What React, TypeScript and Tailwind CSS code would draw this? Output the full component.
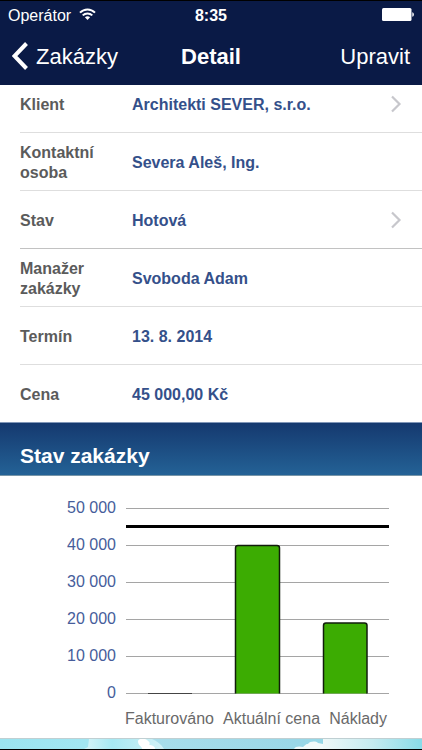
type Detail = { label: string; value: string; link?: boolean; strong?: boolean };

const details: Detail[] = [
  { label: "Klient", value: "Architekti SEVER, s.r.o.", link: true },
  { label: "Kontaktní osoba", value: "Severa Aleš, Ing." },
  { label: "Stav", value: "Hotová", link: true, strong: true },
  { label: "Manažer zakázky", value: "Svoboda Adam" },
  { label: "Termín", value: "13. 8. 2014" },
  { label: "Cena", value: "45 000,00 Kč" },
];

const ticks = ["50 000", "40 000", "30 000", "20 000", "10 000", "0"];
const gridLines = [1, 38, 75, 112, 149, 186];

function StatusBar() {
  return (
    <div className="grid h-7 grid-cols-3 items-center px-2 pt-0.5 text-base leading-6">
      <div className="flex items-center gap-2">
        <span>Operátor</span>
        <svg className="mb-1" width="17" height="12" viewBox="0 0 17 12" fill="none" stroke="currentColor" strokeWidth="2" aria-hidden="true">
          <path d="M1 4.6C5.2.3 11.8.3 16 4.6" />
          <path d="M3.7 7.4c2.7-2.7 6.9-2.7 9.6 0" />
          <path d="M8.5 12 5.9 9.3c1.5-1.4 3.7-1.4 5.2 0Z" fill="currentColor" stroke="none" />
        </svg>
      </div>
      <span className="text-center font-bold">8:35</span>
      <svg className="mb-1 justify-self-end" width="32" height="13" viewBox="0 0 32 13" fill="currentColor" aria-hidden="true">
        <rect x="0" y="0" width="29.5" height="13" rx="1.5" />
        <path d="M30.3 4.2c1 .4 1.6 1.2 1.6 2.3s-.6 1.900-1.6 2.300Z" />
      </svg>
    </div>
  );
}

function DetailRow({ label, value, link, strong }: Detail) {
  const content = (
    <>
      <span className="w-28 shrink-0 pr-6 text-[#5b5b5b]">{label}</span>
      <span className="flex-1 text-[#34508a]">{value}</span>
      {link && (
        <svg className="mb-0.5" width="12" height="18" viewBox="0 0 12 18" fill="none" stroke="#c7c7cc" strokeWidth="2.2" aria-hidden="true">
          <path d="m2 1.500 7.500 7.500L2 16.500" />
        </svg>
      )}
    </>
  );
  const row = "flex h-full w-full items-center pt-0.5 pr-5 text-left";
  return (
    <li className={`h-[58px] border-b last:h-[57px] last:border-b-0 ${strong ? "border-[#c2c2c2]" : "border-[#dedede]"}`}>
      {link ? <button type="button" className={row}>{content}</button> : <div className={row}>{content}</div>}
    </li>
  );
}

function Chart() {
  return (
    <section aria-label="Stav zakázky" className="bg-white pt-[31px] pr-[33px] pb-[7px]">
      <div className="flex gap-[9px]">
        <div className="-my-[18px] flex w-[117px] flex-col pr-px text-right text-base leading-[37px] text-[#465d9b]">
          {ticks.map((t) => <span key={t}>{t}</span>)}
        </div>
        <svg className="h-[188px] min-w-0 flex-1" viewBox="0 0 263 188" preserveAspectRatio="none" role="img" aria-label="Fakturováno 0, Aktuální cena 40 000, Náklady 19 000">
          {gridLines.map((y) => <rect key={y} x="0" y={y} width="263" height="1" fill="#a5a5a5" />)}
          <path d="M22 186.500h44" stroke="#444" />
          <path d="M109.500 186.500V41a2.500 2.500 0 0 1 2.500-2.500h39a2.500 2.500 0 0 1 2.500 2.500v145.500" fill="#3cac02" stroke="#111c0c" strokeWidth="1.500" />
          <path d="M197.500 186.500V118.500a2.500 2.500 0 0 1 2.500-2.500h38.500a2.500 2.500 0 0 1 2.500 2.500v68" fill="#3cac02" stroke="#111c0c" strokeWidth="1.500" />
          <rect x="0" y="18" width="263" height="3" fill="#000" />
        </svg>
      </div>
      <div className="mt-3 ml-[125px] flex justify-between pr-0.5 text-base leading-6 whitespace-nowrap text-[#696969]">
        <span>Fakturováno</span>
        <span>Aktuální cena</span>
        <span>Náklady</span>
      </div>
    </section>
  );
}

function SkyStrip() {
  return (
    <footer className="border-t border-b border-t-[#bfcfd2] border-b-black">
      <svg className="block h-[10px] w-full" viewBox="0 0 422 10" preserveAspectRatio="none" aria-hidden="true">
        <defs>
          <linearGradient id="sky">
            <stop offset="0" stopColor="#9be4f0" />
            <stop offset=".2" stopColor="#a2e6f2" />
            <stop offset=".35" stopColor="#a9deeb" />
            <stop offset=".7" stopColor="#9ad7e7" />
            <stop offset="1" stopColor="#83d9e7" />
          </linearGradient>
          <linearGradient id="haze">
            <stop offset="0" stopColor="#eef8f8" />
            <stop offset=".5" stopColor="#c5ebf0" />
            <stop offset="1" stopColor="#88dbe8" />
          </linearGradient>
          <linearGradient id="glow">
            <stop offset="0" stopColor="#d8f4f8" />
            <stop offset=".35" stopColor="#a7e9f3" />
            <stop offset="1" stopColor="#d3f1f6" />
          </linearGradient>
        </defs>
        <path fill="url(#sky)" d="M0 0h422v10H0z" />
        <path fill="url(#glow)" d="M89 0h63c5 2 9 5 12 10H84l4-2z" />
        <path fill="#fff" d="M138 2c1-3 8-3 10 0 2 1 2 3 1 4 3 0 6 1 6 4h-13c0-3-4-3-4-8Z" />
        <path fill="url(#haze)" d="M323 0h99v10h-99z" />
        <path fill="#f1fafa" d="M294 10c1-3 6-3 9-2 2-1 2-3 5-3 2-3 8-3 10-1l5 1v5z" />
      </svg>
    </footer>
  );
}

export default function App() {
  return (
    <div className="w-full overflow-hidden bg-white font-['Liberation_Sans',Arial,sans-serif]">
      <header className="relative z-10 border-t border-black bg-[#0a1a46] text-white">
        <StatusBar />
        <nav className="grid h-14 grid-cols-[1fr_auto_1fr] items-center px-3 pb-0.5 text-[22px]">
          <button type="button" className="flex items-center gap-2 justify-self-start">
            <svg width="16" height="28" viewBox="0 0 16 28" fill="none" stroke="currentColor" strokeWidth="4" aria-hidden="true">
              <path d="M14.500 1.500 2.500 14l12 12.500" />
            </svg>
            Zakázky
          </button>
          <h1 className="font-bold">Detail</h1>
          <button type="button" className="justify-self-end">Upravit</button>
        </nav>
      </header>
      <main>
        <ul className="-mt-[10px] pl-5 text-base leading-5 font-bold">
          {details.map((d) => <DetailRow key={d.label} {...d} />)}
        </ul>
        <h2 className="border-t border-b border-t-[#8197b8] border-b-[#7795a8] bg-linear-to-b from-[#15396f] to-[#246296] px-5 pt-[17px] pb-[3px] text-[21px] leading-8 font-bold text-white">
          Stav zakázky
        </h2>
        <Chart />
      </main>
      <SkyStrip />
    </div>
  );
}
